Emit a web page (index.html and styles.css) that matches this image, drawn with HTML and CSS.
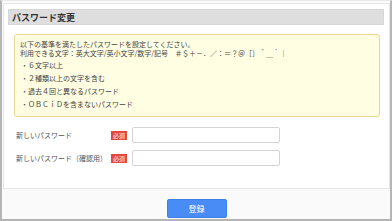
FILE: index.html
```html
<!DOCTYPE html>
<html lang="ja">
<head>
  <meta charset="UTF-8" />
  <meta name="viewport" content="width=device-width, initial-scale=1.0">
  <title>パスワード変更</title>
  <link rel="stylesheet" href="styles.css">
</head>
<body>
  <div class="frame">
    <div class="panel">
      <h1 class="panel-title">パスワード変更</h1>

      <div class="notice">
        <p>以下の基準を満たしたパスワードを設定してください。<br>利用できる文字：英大文字/英小文字/数字/記号　＃＄＋－．／：＝？＠［］＾＿｀｜</p>
        <ul>
          <li>・６文字以上</li>
          <li>・２種類以上の文字を含む</li>
          <li>・過去４回と異なるパスワード</li>
          <li>・ＯＢＣｉＤを含まないパスワード</li>
        </ul>
      </div>

      <div class="form-row">
        <label for="newPassword">新しいパスワード</label>
        <span class="required">必須</span>
        <input type="password" id="newPassword" />
      </div>
      <div class="form-row">
        <label for="confirmPassword">新しいパスワード（確認用）</label>
        <span class="required">必須</span>
        <input type="password" id="confirmPassword" />
      </div>
    </div>

    <div class="actions">
      <button class="submit-btn">登録</button>
    </div>
  </div>
</body>
</html>
```

FILE: styles.css
```css
* {
  box-sizing: border-box;
}

body {
  margin: 0;
  font-family: "Noto Sans CJK JP", "Noto Sans", sans-serif;
  color: #444;
  background: #fff;
}

.frame {
  height: 221px;
  background: #fafafa;
  border: 2px solid #b5b5b5;
  border-top: 1px solid #e8e8e8;
  padding: 2px 0 0 1px;
}

.panel {
  width: 387px;
  background: white;
  border: 1px solid #e6e6e6;
  padding: 5px 5px 22px 4px;
}

.panel-title {
  margin: 0;
  height: 16px;
  line-height: 16px;
  background: #dedede;
  border: 1px solid #d6d6d6;
  padding-left: 3px;
  font-size: 9px;
  font-weight: bold;
  color: #333;
}

.notice {
  margin: 9px 4px 0 6px;
  background: #fffde2;
  border: 1px solid #e8d690;
  border-radius: 3px;
  padding: 5px 5px 5px 5px;
  font-size: 7px;
  color: #444;
}

.notice p {
  margin: 0;
  line-height: 9px;
}

.notice ul {
  list-style: none;
  margin: 1px 0 0;
  padding: 0 0 0 1px;
}

.notice li {
  line-height: 13px;
}

.form-row {
  display: flex;
  align-items: center;
  margin: 10px 0 0 8px;
  font-size: 7px;
  color: #555;
}

.form-row + .form-row {
  margin-top: 7px;
}

.form-row label {
  width: 95px;
}

.required {
  width: 16px;
  height: 9px;
  line-height: 9px;
  background: #e8453c;
  color: white;
  font-size: 6px;
  text-align: center;
  margin-right: 5px;
}

.form-row input {
  width: 148px;
  height: 16px;
  border: 1px solid #d4d4d4;
  border-radius: 2px;
  padding: 0 4px;
  background: white;
}

.actions {
  display: flex;
  justify-content: center;
  padding-top: 10px;
}

.submit-btn {
  width: 60px;
  height: 19px;
  padding: 0;
  background: #4a8cf6;
  color: white;
  border: 1px solid #3d7fe8;
  border-radius: 2px;
  font-family: "Noto Sans CJK JP", sans-serif;
  font-size: 8px;
  cursor: pointer;
}
```
